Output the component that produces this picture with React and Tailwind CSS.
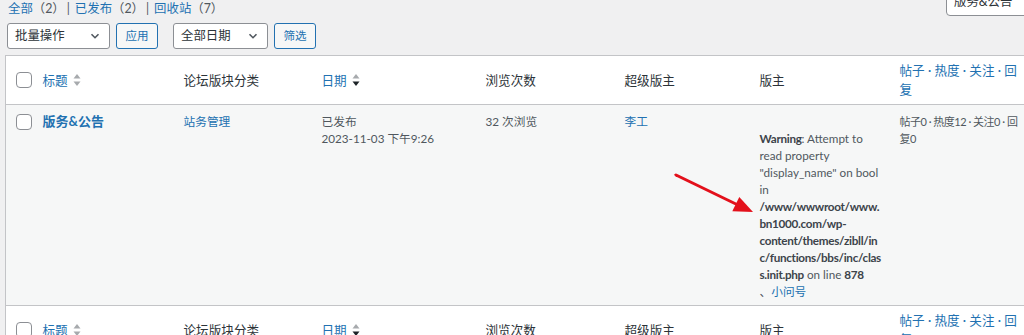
import React from 'react';

const BLUE = 'text-[#2271b1]';

function Checkbox() {
  return <span className="block w-[16px] h-[16px] rounded-[4px] border border-[#8c8f94] bg-white" />;
}

function SortIcon({ active }) {
  return (
    <svg width="8" height="14" viewBox="0 0 8 14" className="inline-block ml-[5px] align-[-2px]">
      <path d="M4 1 L7.5 5.5 L0.5 5.5 Z" fill="#a7aaad" />
      <path d="M4 13 L7.5 8.5 L0.5 8.5 Z" fill={active ? '#1d2327' : '#a7aaad'} />
    </svg>
  );
}

function Chevron() {
  return (
    <svg width="12" height="12" viewBox="0 0 12 12" className="shrink-0">
      <path d="M2.5 4.2 L6 7.7 L9.5 4.2" fill="none" stroke="#50575e" strokeWidth="1.6" />
    </svg>
  );
}

function HeaderRow({ top }) {
  const th = 'px-[10px] align-middle text-left font-normal text-[12.6px] leading-[19px]';
  return (
    <tr className={top ? 'border-b border-[#c3c4c7]' : 'border-t border-[#c3c4c7]'}>
      <th className="pl-[10px] h-[49px] align-middle">
        <Checkbox />
      </th>
      <th className={th}>
        <span className={BLUE}>标题</span>
        <SortIcon />
      </th>
      <th className={`${th} text-[#2c3338]`}>论坛版块分类</th>
      <th className={th}>
        <span className={BLUE}>日期</span>
        <SortIcon active />
      </th>
      <th className={`${th} text-[#2c3338]`}>浏览次数</th>
      <th className={`${th} text-[#2c3338]`}>超级版主</th>
      <th className={`${th} text-[#2c3338]`}>版主</th>
      <th className={`${th} ${BLUE}`}>帖子 · 热度 · 关注 · 回复</th>
    </tr>
  );
}

export default function App() {
  const td = 'px-[10px] pt-[8px] pb-[5px] align-top text-[11.7px] leading-[17px] text-[#50575e]';
  const strong = 'font-bold text-[#3c434a] tracking-[-0.3px]';

  return (
    <div className="relative w-[1024px] h-[335px] overflow-hidden bg-[#f0f0f1] font-['Lato','Noto_Sans_CJK_SC',sans-serif]">
      <div className="flex items-start">
        <ul className="flex pl-[8px] text-[12.4px] leading-[17px] text-[#50575e]">
          <li>
            <span className={BLUE}>全部</span>（2）
          </li>
          <li className="ml-[2px]">
            |<span className={`ml-[5px] ${BLUE}`}>已发布</span>（2）
          </li>
          <li className="ml-[2px]">
            |<span className={`ml-[5px] ${BLUE}`}>回收站</span>（7）
          </li>
        </ul>
        <div className="ml-auto mr-[-14px] -mt-[11px] h-[27px] w-[92px] shrink-0 flex items-center px-[7px] bg-white border border-[#8c8f94] rounded-[4px] text-[12.4px] text-[#2c3338]">
          版务&amp;公告
        </div>
      </div>

      <div className="flex items-center mt-[6px] pl-[7px] text-[12.4px]">
        <div className="w-[103px] h-[26px] flex items-center justify-between pl-[7px] pr-[8px] bg-white border border-[#8c8f94] rounded-[3px] text-[#2c3338]">
          批量操作
          <Chevron />
        </div>
        <div className="ml-[6px] w-[42px] h-[26px] flex items-center justify-center bg-[#f6f7f7] border border-[#2271b1] rounded-[3px] text-[11.5px] text-[#2271b1]">
          应用
        </div>
        <div className="ml-[15px] w-[95px] h-[26px] flex items-center justify-between pl-[7px] pr-[8px] bg-white border border-[#8c8f94] rounded-[3px] text-[#2c3338]">
          全部日期
          <Chevron />
        </div>
        <div className="ml-[6px] w-[42px] h-[26px] flex items-center justify-center bg-[#f6f7f7] border border-[#2271b1] rounded-[3px] text-[11.5px] text-[#2271b1]">
          筛选
        </div>
      </div>

      <div className="mt-[6px] ml-[5px]">
        <table className="table-fixed w-[1032px] border border-[#c3c4c7] bg-white">
          <colgroup>
            <col className="w-[27px]" />
            <col className="w-[141px]" />
            <col className="w-[138px]" />
            <col className="w-[164px]" />
            <col className="w-[139px]" />
            <col className="w-[135px]" />
            <col className="w-[140px]" />
            <col className="w-[148px]" />
          </colgroup>
          <thead>
            <HeaderRow top />
          </thead>
          <tbody>
            <tr className="bg-[#f6f7f7]">
              <td className="pl-[10px] pt-[9px] align-top">
                <Checkbox />
              </td>
              <td className={td}>
                <span className="font-bold text-[13px] text-[#2271b1]">版务&amp;公告</span>
              </td>
              <td className={td}>
                <span className={BLUE}>站务管理</span>
              </td>
              <td className={td}>
                已发布
                <br />
                2023-11-03 下午9:26
              </td>
              <td className={td}>32 次浏览</td>
              <td className={td}>
                <span className={BLUE}>李工</span>
              </td>
              <td className={`${td} pr-[7px] break-words`}>
                <br />
                <b className={strong}>Warning</b>: Attempt to read property "display_name" on bool in{' '}
                <b className={strong}>/www/wwwroot/www.bn1000.com/wp-content/themes/zibll/inc/functions/bbs/inc/class.init.php</b>{' '}
                on line <b className={strong}>878</b>
                <br />
                、<span className={BLUE}>小问号</span>
              </td>
              <td className={`${td} pr-[17px] text-[11px] tracking-[-0.5px]`}>
                帖子0 · 热度12 · 关注0 · 回复0
              </td>
            </tr>
          </tbody>
          <tfoot>
            <HeaderRow />
          </tfoot>
        </table>
      </div>

      <svg width="100" height="60" viewBox="0 0 100 60" className="absolute left-[670px] top-[168px] pointer-events-none">
        <line x1="6" y1="7" x2="70" y2="38" stroke="#e3101b" strokeWidth="3" strokeLinecap="round" />
        <polygon points="83,44 69.3,28.9 62.3,43.3" fill="#e3101b" />
      </svg>
    </div>
  );
}
